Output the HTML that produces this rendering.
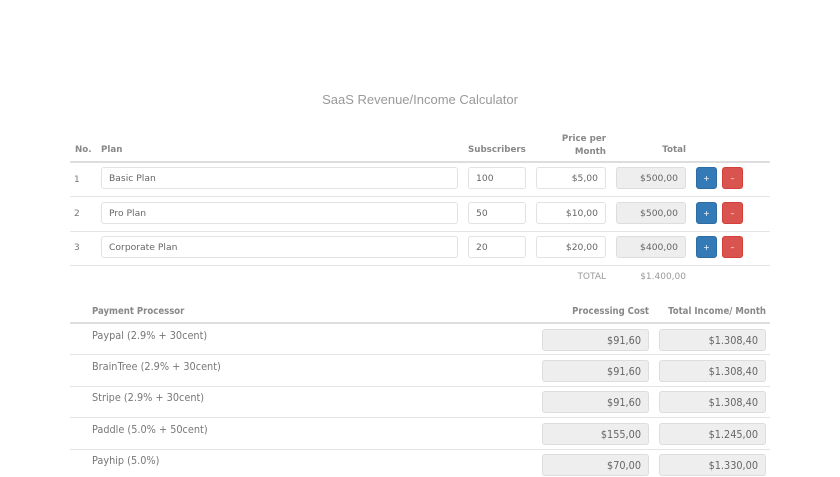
<!DOCTYPE html>
<html><head><meta charset="utf-8"><style>
*{margin:0;padding:0;box-sizing:border-box}
body{width:840px;height:472px;background:#fff;position:relative;overflow:hidden;font-family:"DejaVu Sans","Liberation Sans",sans-serif;color:#777}
.a{position:absolute;white-space:nowrap}
.t{font-family:"Liberation Sans",sans-serif;font-size:13px;color:#999;left:0;width:840px;text-align:center;top:92px}
.h{font-size:8.7px;font-weight:bold;color:#888}
.c{font-size:9px;color:#777}
.in{position:absolute;height:22px;border:1px solid #e2e2e2;border-radius:3px;background:#fff;font-size:9.2px;color:#666;line-height:22px;padding:0 7px}
.ro{background:#eee;border-color:#ddd;text-align:right}
.r{text-align:right}
.ln{position:absolute;left:70px;width:700px;height:1px;background:#e4e4e4}
.b{position:absolute;width:21px;height:22px;border-radius:3px;color:#fff;font-size:8px;text-align:center;line-height:21px}
.bl{background:#337ab7;border:1px solid #2e6da4}
.rd{background:#d9534f;border:1px solid #d43f3a}
.c2{font-family:"DejaVu Sans Condensed","DejaVu Sans",sans-serif;font-size:10.8px}
.h.c2{font-size:9.5px}
</style></head><body>
<div class="a t">SaaS Revenue/Income Calculator</div>

<div class="a h" style="left:75px;top:145px">No.</div>
<div class="a h" style="left:101px;top:145px">Plan</div>
<div class="a h" style="left:468px;top:145px">Subscribers</div>
<div class="a h r" style="left:536px;width:70px;top:133px;line-height:12.5px;white-space:normal">Price per<br>Month</div>
<div class="a h r" style="left:616px;width:70px;top:145px">Total</div>
<div class="ln" style="top:161px;height:2px;background:#ddd"></div>

<div class="a c" style="left:74px;top:175px">1</div>
<div class="in" style="left:101px;top:167px;width:357px">Basic Plan</div>
<div class="in" style="left:468px;top:167px;width:58px">100</div>
<div class="in r" style="left:536px;top:167px;width:70px">$5,00</div>
<div class="in ro" style="left:616px;top:167px;width:70px">$500,00</div>
<div class="b bl" style="left:696px;top:167px">+</div>
<div class="b rd" style="left:722px;top:167px">–</div>
<div class="ln" style="top:196px"></div>

<div class="a c" style="left:74px;top:209px">2</div>
<div class="in" style="left:101px;top:202px;width:357px">Pro Plan</div>
<div class="in" style="left:468px;top:202px;width:58px">50</div>
<div class="in r" style="left:536px;top:202px;width:70px">$10,00</div>
<div class="in ro" style="left:616px;top:202px;width:70px">$500,00</div>
<div class="b bl" style="left:696px;top:202px">+</div>
<div class="b rd" style="left:722px;top:202px">–</div>
<div class="ln" style="top:231px"></div>

<div class="a c" style="left:74px;top:243px">3</div>
<div class="in" style="left:101px;top:236px;width:357px">Corporate Plan</div>
<div class="in" style="left:468px;top:236px;width:58px">20</div>
<div class="in r" style="left:536px;top:236px;width:70px">$20,00</div>
<div class="in ro" style="left:616px;top:236px;width:70px">$400,00</div>
<div class="b bl" style="left:696px;top:236px">+</div>
<div class="b rd" style="left:722px;top:236px">–</div>
<div class="ln" style="top:265px"></div>

<div class="a c r" style="left:536px;width:70px;top:272px;color:#999">TOTAL</div>
<div class="a c r" style="left:616px;width:70px;top:272px;color:#999">$1.400,00</div>

<div class="a h c2" style="left:92px;top:306px">Payment Processor</div>
<div class="a h c2 r" style="left:520px;width:129px;top:306px">Processing Cost</div>
<div class="a h c2 r" style="left:640px;width:126px;top:306px">Total Income/ Month</div>
<div class="ln" style="top:322px;height:2px;background:#ddd"></div>

<div class="a c c2" style="left:92px;top:329px">Paypal (2.9% + 30cent)</div>
<div class="in ro c2" style="left:542px;top:329px;width:107px">$91,60</div>
<div class="in ro c2" style="left:659px;top:329px;width:107px">$1.308,40</div>
<div class="ln" style="top:354px"></div>

<div class="a c c2" style="left:92px;top:360px">BrainTree (2.9% + 30cent)</div>
<div class="in ro c2" style="left:542px;top:360px;width:107px">$91,60</div>
<div class="in ro c2" style="left:659px;top:360px;width:107px">$1.308,40</div>
<div class="ln" style="top:386px"></div>

<div class="a c c2" style="left:92px;top:391px">Stripe (2.9% + 30cent)</div>
<div class="in ro c2" style="left:542px;top:391px;width:107px">$91,60</div>
<div class="in ro c2" style="left:659px;top:391px;width:107px">$1.308,40</div>
<div class="ln" style="top:417px"></div>

<div class="a c c2" style="left:92px;top:423px">Paddle (5.0% + 50cent)</div>
<div class="in ro c2" style="left:542px;top:423px;width:107px">$155,00</div>
<div class="in ro c2" style="left:659px;top:423px;width:107px">$1.245,00</div>
<div class="ln" style="top:449px"></div>

<div class="a c c2" style="left:92px;top:454px">Payhip (5.0%)</div>
<div class="in ro c2" style="left:542px;top:454px;width:107px">$70,00</div>
<div class="in ro c2" style="left:659px;top:454px;width:107px">$1.330,00</div>
</body></html>
